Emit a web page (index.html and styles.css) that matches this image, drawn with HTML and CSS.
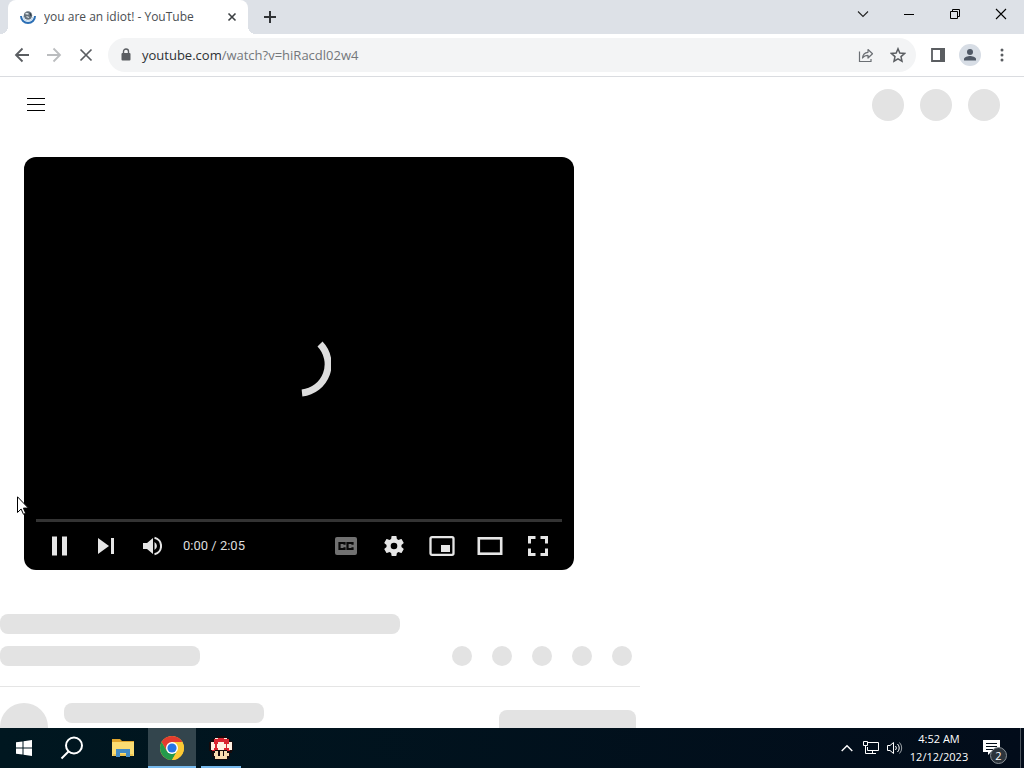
FILE: index.html
```html
<!DOCTYPE html>
<html lang="en">
<head>
<meta charset="utf-8">
<meta name="viewport" content="width=device-width, initial-scale=1">
<title>you are an idiot! - YouTube</title>
<link rel="stylesheet" href="styles.css">
</head>
<body>
<div class="desktop">
  <header class="tabstrip">
    <div class="tab">
      <svg class="favicon" width="16" height="16" viewBox="0 0 16 16"><path d="M1 7a7 7 0 1 0 14 0" fill="none" stroke="#2c6fb5" stroke-width="2"/><path d="M3.500 7a4.500 4.500 0 0 0 9 1" fill="none" stroke="#a9cbe8" stroke-width="1"/><circle cx="8" cy="6.500" r="4.200" fill="#65717b"/><path d="M5.500 4.500l3 .5M6.500 7.500l2.500 1" stroke="#dfe5e9" stroke-width="1.300"/><path d="M10 4l1 3" stroke="#263746"/></svg>
      <span class="tab-title">you are an idiot! - YouTube</span>
      <button class="tab-close" aria-label="Close tab"><svg width="10" height="10" viewBox="0 0 10 10"><path d="M1.500 1.500l7 7M8.500 1.500l-7 7" stroke="#3c4043" stroke-width="1.600"/></svg></button>
    </div>
    <button class="new-tab" aria-label="New tab"><svg width="12" height="12" viewBox="0 0 12 12"><path d="M6 0v12M0 6h12" stroke="#303336" stroke-width="2"/></svg></button>
    <div class="window-controls">
      <button aria-label="Search tabs"><svg width="12" height="12" viewBox="0 0 12 12"><path d="M1 3.500l5 5 5-5" fill="none" stroke="#222" stroke-width="1.100"/></svg></button>
      <button aria-label="Minimize"><svg width="10" height="10" viewBox="0 0 10 10"><path d="M0 5.500h10" stroke="#000"/></svg></button>
      <button aria-label="Restore"><svg width="10" height="10" viewBox="0 0 10 10"><path d="M.5 2.500h7v7h-7zM2.500 2.500v-2h7v7h-2" fill="none" stroke="#000"/></svg></button>
      <button aria-label="Close"><svg width="12" height="12" viewBox="0 0 12 12"><path d="M1 1l10 10M11 1L1 11" stroke="#000" stroke-width="1.100"/></svg></button>
    </div>
  </header>

  <nav class="toolbar">
    <button class="tool" aria-label="Back"><svg width="16" height="16" viewBox="0 0 16 16"><path d="M15 8H2M8.500 1.500L2 8l6.500 6.500" fill="none" stroke="#5a5d61" stroke-width="1.800"/></svg></button>
    <button class="tool" aria-label="Forward"><svg width="16" height="16" viewBox="0 0 16 16"><path d="M1 8h13M7.500 1.500L14 8l-6.500 6.500" fill="none" stroke="#bbbdbf" stroke-width="1.800"/></svg></button>
    <button class="tool" aria-label="Stop"><svg width="14" height="14" viewBox="0 0 14 14"><path d="M1.500 1.500l11 11M12.500 1.500l-11 11" stroke="#5a5d61" stroke-width="1.700"/></svg></button>
    <div class="omnibox">
      <svg class="lock" width="10" height="14" viewBox="0 0 10 14"><rect x="0.500" y="5" width="9" height="7.500" rx="1" fill="#5a5d61"/><path d="M2.500 6V3.500a2.500 2.500 0 0 1 5 0V6" fill="none" stroke="#5a5d61" stroke-width="1.400"/></svg>
      <a class="url" href="#"><span class="host">youtube.com</span>/watch?v=hiRacdl02w4</a>
      <button class="tool" aria-label="Share"><svg width="16" height="16" viewBox="0 0 16 16"><path d="M1.500 4.500v10h11.500v-2.500" fill="none" stroke="#6b6f74" stroke-width="1.200"/><path d="M4.500 11c.3-3.500 2.200-5.500 5.500-5.700V2.500l4.500 4.200L10 11V8.300c-2.500 0-4.200.8-5.500 2.700z" fill="none" stroke="#6b6f74" stroke-width="1.200" stroke-linejoin="round"/></svg></button>
      <button class="tool" aria-label="Bookmark"><svg width="16" height="16" viewBox="0 0 16 16"><path d="M8 1.800l1.800 4.300 4.700.4-3.500 3.100 1 4.600L8 11.800l-4 2.400 1-4.600-3.500-3.100 4.700-.4z" fill="none" stroke="#5a5d61" stroke-width="1.500"/></svg></button>
    </div>
    <button class="tool" aria-label="Side panel"><svg width="14" height="14" viewBox="0 0 14 14"><path d="M1 1h12v12H1z" fill="none" stroke="#5a5d61" stroke-width="1.800"/><path d="M9 0h5v14H9z" fill="#5a5d61"/></svg></button>
    <button class="tool" aria-label="Profile"><svg width="22" height="22" viewBox="0 0 22 22"><circle cx="11" cy="11" r="11" fill="#d7dde5"/><circle cx="11" cy="8" r="3" fill="#4f5866"/><path d="M5 16.500v-1.500c0-2 4-3 6-3s6 1 6 3v1.500z" fill="#4f5866"/></svg></button>
    <button class="tool" aria-label="Menu"><svg width="4" height="14" viewBox="0 0 4 14" fill="#5a5d61"><circle cx="2" cy="2" r="1.500"/><circle cx="2" cy="7" r="1.500"/><circle cx="2" cy="12" r="1.500"/></svg></button>
  </nav>

  <main class="page">
    <div class="masthead">
      <button class="guide" aria-label="Guide"><svg width="18" height="16" viewBox="0 0 18 16"><path d="M0 1.500h18M0 7.500h18M0 13.500h18" stroke="#000"/></svg></button>
      <div class="masthead-end"><span class="avatar-ghost"></span><span class="avatar-ghost"></span><span class="avatar-ghost"></span></div>
    </div>

    <section class="player">
      <div class="stage"><svg width="64" height="64" viewBox="0 0 64 64"><path d="M53 11A29 29 0 0 1 35 60" fill="none" stroke="#ddd" stroke-width="7"/></svg></div>
      <div class="progress"></div>
      <div class="controls">
        <button class="first" aria-label="Pause"><svg width="18" height="20" viewBox="0 0 18 20" fill="#e6e6e6"><path d="M1 .5h5v19H1zM11 .5h5v19h-5z"/></svg></button>
        <button aria-label="Next"><svg width="18" height="18" viewBox="0 0 18 18" fill="#e6e6e6"><path d="M1 1l11 8-11 8zM14 1h3v16h-3z"/></svg></button>
        <button aria-label="Mute"><svg width="20" height="20" viewBox="0 0 20 20" fill="#e6e6e6"><path d="M1 7v6h4l6 5V2L5 7zM12.500 6v8a4.500 4.500 0 0 0 0-8z"/><path d="M12.500 1.800a8.400 8.400 0 0 1 0 16.400" fill="none" stroke="#e6e6e6" stroke-width="2"/></svg></button>
        <span class="time">0:00 / 2:05</span>
        <div class="controls-end">
          <button aria-label="Subtitles"><svg width="22" height="18" viewBox="0 0 22 18"><rect width="22" height="18" rx="2" fill="#717171"/><path d="M9.500 7.800V6H4.500v6h5v-1.800M17.500 7.800V6h-5v6h5v-1.800" fill="none" stroke="#080808" stroke-width="2.200"/></svg></button>
          <button aria-label="Settings"><svg width="24" height="24" viewBox="0 0 24 24"><path fill="#e6e6e6" d="M19.430 12.980c.04-.32.070-.64.070-.98s-.03-.66-.07-.98l2.110-1.650c.19-.15.240-.42.120-.64l-2-3.460c-.12-.22-.39-.3-.61-.22l-2.490 1c-.52-.4-1.080-.73-1.690-.98l-.38-2.650C14.460 2.180 14.250 2 14 2h-4c-.25 0-.46.18-.49.42l-.38 2.650c-.61.250-1.170.59-1.690.98l-2.490-1c-.23-.09-.49 0-.61.22l-2 3.460c-.13.220-.07.490.12.640l2.110 1.650c-.04.320-.07.650-.07.980s.03.660.07.980l-2.110 1.650c-.19.150-.24.420-.12.640l2 3.460c.12.220.39.300.61.220l2.490-1c.52.400 1.080.730 1.690.980l.38 2.650c.03.240.24.420.49.420h4c.25 0 .46-.18.490-.42l.38-2.650c.61-.25 1.170-.59 1.690-.98l2.490 1c.23.090.49 0 .61-.22l2-3.460c.12-.22.070-.49-.12-.64zM12 15.300a3.300 3.300 0 1 1 0-6.600 3.300 3.300 0 0 1 0 6.600z"/></svg></button>
          <button aria-label="Miniplayer"><svg width="26" height="20" viewBox="0 0 26 20"><rect x="1.500" y="1.200" width="23" height="17.600" rx="1.500" fill="none" stroke="#e6e6e6" stroke-width="2.300"/><path d="M12 9h9v7h-9z" fill="#e6e6e6"/></svg></button>
          <button aria-label="Theater mode"><svg width="26" height="18" viewBox="0 0 26 18"><rect x="1.800" y="1.300" width="22.400" height="15.400" fill="none" stroke="#e6e6e6" stroke-width="2.600"/></svg></button>
          <button aria-label="Full screen"><svg width="20" height="20" viewBox="0 0 20 20"><path d="M1.500 7.500v-6h6M12.500 1.500h6v6M18.500 12.500v6h-6M7.500 18.500h-6v-6" fill="none" stroke="#e6e6e6" stroke-width="3"/></svg></button>
        </div>
      </div>
    </section>

    <section class="details">
      <div class="ghost ghost-title"></div>
      <div class="meta">
        <div class="ghost ghost-line"></div>
        <div class="actions"><span class="dot"></span><span class="dot"></span><span class="dot"></span><span class="dot"></span><span class="dot"></span></div>
      </div>
      <div class="owner">
        <span class="owner-avatar"></span>
        <div class="ghost ghost-line"></div>
        <div class="ghost subscribe"></div>
      </div>
    </section>
  </main>

  <footer class="taskbar">
    <button class="task" aria-label="Start"><svg width="16" height="16" viewBox="0 0 16 16" fill="#fff"><path d="M0 2.300l6.500-.9v6.100H0zM7.500 1.200L16 0v7.500H7.500zM0 8.500h6.500v6.100L0 13.700zM7.500 8.500H16V16l-8.500-1.200z"/></svg></button>
    <button class="task" aria-label="Search"><svg width="24" height="24" viewBox="0 0 24 24" fill="none" stroke="#fff" stroke-width="2"><circle cx="14" cy="9.500" r="8"/><path d="M8.500 15.500L1.500 22.500"/></svg></button>
    <div class="apps">
      <button class="task" aria-label="File Explorer"><svg width="22" height="20" viewBox="0 0 22 20"><path d="M0 1h8l2 2h12v15H0z" fill="#e0a52d"/><path d="M0 4h22v14H0z" fill="#fbdc72"/><path d="M1 16h20v2H1z" fill="#edc451"/><path d="M4 19v-8h14v8h-4v-4H8v4z" fill="#438bc5"/></svg></button>
      <button class="task active" aria-label="Google Chrome"><svg width="24" height="24" viewBox="0 0 24 24"><circle cx="12" cy="12" r="12" fill="#fcc934"/><path d="M1.610 6A12 12 0 0 1 22.390 6H12L6.800 15z" fill="#e33b2e"/><path d="M1.610 6A12 12 0 0 0 12 24l5.200-9-5.200 3-5.200-3z" fill="#249a4b"/><path d="M22.390 6A12 12 0 0 1 12 24l5.200-9L17 6z" fill="#fcc934"/><circle cx="12" cy="12" r="6" fill="#fff"/><circle cx="12" cy="12" r="4.600" fill="#2674e4"/></svg></button>
      <button class="task open" aria-label="Mushroom"><svg width="24" height="24" viewBox="0 0 16 16" shape-rendering="crispEdges"><path d="M5 0h6v1h2v1h1v1h1v1h1v6h-1v1h-1v3h-1v1h-1v1H4v-1H3v-1H2v-3H1v-1H0V4h1V3h1V2h1V1h2z" fill="#160b0c"/><path d="M5 1h6v1h2v2h1v6H2V4h1V2h2z" fill="#d92531"/><path d="M6 4h4v1h1v3h-1v1H6V8H5V5h1zM1 4h2v1h1v3H3v1H1zM13 4h2v5h-2V8h-1V5h1zM4 1h2v1H4zM10 1h2v1h-2z" fill="#fff0e2"/><path d="M4 9h8v1H4z" fill="#160b0c"/><path d="M4 10h8v1h1v2h-1v2H4v-2H3v-2h1z" fill="#f8dcb0"/><path d="M6 10h1v3H6zM9 10h1v3H9z" fill="#160b0c"/></svg></button>
    </div>
    <div class="tray">
      <button aria-label="Show hidden icons"><svg width="12" height="8" viewBox="0 0 12 8"><path d="M.7 7L6 1.700 11.300 7" fill="none" stroke="#fff" stroke-width="1.400"/></svg></button>
      <button aria-label="Network"><svg width="18" height="16" viewBox="0 0 18 16" fill="none" stroke="#fff"><path d="M6 2.500h10.500v8H5.500V7M10.500 10.500v3M7 13.500h7M1.500 1.500h4v4h-4zM3.500 5.500v8H7"/></svg></button>
      <button aria-label="Volume"><svg width="16" height="14" viewBox="0 0 16 14" fill="none" stroke="#fff"><path d="M.5 4.500h2.500l3.500-3v11L3 9.500H.5z"/><path d="M8.500 5a3 3 0 0 1 0 4M10.500 3a5.500 5.500 0 0 1 0 8"/><path d="M12.500 1.500a8 8 0 0 1 0 11" stroke="#9da3a8"/></svg></button>
      <div class="clock"><time>4:52 AM</time><time>12/12/2023</time></div>
      <button class="notices" aria-label="Notifications"><svg width="18" height="16" viewBox="0 0 18 16"><path d="M0 0h17v12H8l-3 3v-3H0z" fill="#fff"/><path d="M3 3.500h11M3 6.500h11M3 9.500h7" stroke="#020d18"/></svg><span class="badge">2</span></button>
      <div class="peek"></div>
    </div>
  </footer>

  <svg class="cursor" width="12" height="19" viewBox="0 0 12 19"><path d="M.5.8v15.700l3.600-3.500 2.400 5.300 2.200-1-2.300-5.200h5z" fill="#fff" stroke="#000"/></svg>
</div>
</body>
</html>
```
FILE: styles.css
```css
* { box-sizing: border-box; }

body {
  margin: 0;
  font-family: "Open Sans", "Noto Sans", sans-serif;
  background: #fff;
}

button {
  display: flex;
  align-items: center;
  justify-content: center;
  padding: 0;
  border: 0;
  background: none;
  color: inherit;
  font: inherit;
}

svg { display: block; flex: none; }

.desktop {
  position: relative;
  display: flex;
  flex-direction: column;
  height: 100vh;
  overflow: hidden;
}

/* Browser frame */
.tabstrip {
  display: flex;
  flex: none;
  height: 34px;
  padding-left: 8px;
  background: #dde1e7;
}

.tab {
  position: relative;
  display: flex;
  align-items: center;
  gap: 8px;
  width: 240px;
  padding: 0 10px 0 12px;
  border-radius: 8px 8px 0 0;
  background: #fff;
}

.tab::before,
.tab::after {
  content: "";
  position: absolute;
  bottom: 0;
  width: 8px;
  height: 8px;
}

.tab::before {
  left: -8px;
  background: radial-gradient(circle at 0 0, #dde1e7 8px, #fff 8px);
}

.tab::after {
  right: -8px;
  background: radial-gradient(circle at 100% 0, #dde1e7 8px, #fff 8px);
}

.tab-title {
  flex: 1;
  overflow: hidden;
  white-space: nowrap;
  font-size: 12px;
  line-height: 16px;
  color: #4a4e52;
}

.tab-close { width: 12px; height: 16px; }
.new-tab { width: 28px; margin-left: 8px; }

.window-controls { display: flex; margin-left: auto; height: 28px; }
.window-controls button { width: 46px; }

.toolbar {
  display: flex;
  flex: none;
  align-items: center;
  height: 43px;
  padding: 0 6px;
  border-bottom: 1px solid #dadce0;
  background: #fff;
}

.tool { flex: none; width: 32px; height: 32px; }

.omnibox {
  display: flex;
  flex: 1;
  align-items: center;
  height: 34px;
  margin: 0 6px;
  padding: 0 2px 0 13px;
  border-radius: 17px;
  background: #f3f4f5;
}

.url {
  flex: 1;
  margin-left: 11px;
  font-size: 13px;
  line-height: 20px;
  color: #74777b;
  text-decoration: none;
}

.host { color: #2e3134; }

/* Page */
.page { flex: 1; min-height: 0; overflow: hidden; }

.masthead {
  display: flex;
  align-items: center;
  justify-content: space-between;
  height: 56px;
  padding: 0 24px 0 16px;
}

.guide { width: 40px; height: 40px; }
.masthead-end { display: flex; gap: 16px; }

.avatar-ghost,
.dot,
.owner-avatar {
  flex: none;
  border-radius: 50%;
  background: #e3e3e3;
}

.avatar-ghost { width: 32px; height: 32px; }

.player {
  display: flex;
  flex-direction: column;
  max-width: 550px;
  aspect-ratio: 4 / 3;
  margin: 24px 24px 0;
  padding: 0 12px;
  border-radius: 12px;
  background: #000;
}

.stage {
  display: flex;
  flex: 1;
  align-items: center;
  justify-content: center;
  padding-top: 54px;
}

.progress { height: 3px; background: #333; }

.controls { display: flex; align-items: center; height: 48px; }
.controls button { width: 46px; height: 48px; }
.controls .first { margin-left: 1px; }

.time {
  margin-left: 8px;
  font-family: Roboto, sans-serif;
  font-size: 13px;
  line-height: 16px;
  color: #ddd;
}

.controls-end { display: flex; margin-left: auto; }
.controls .controls-end button { width: 48px; }

.details { max-width: 640px; margin-top: 44px; }
.ghost { height: 20px; border-radius: 8px; background: #e3e3e3; }
.ghost-title { width: 400px; }
.ghost-line { width: 200px; }

.meta {
  display: flex;
  align-items: center;
  justify-content: space-between;
  padding: 12px 8px 20px 0;
  border-bottom: 1px solid #e5e5e5;
}

.actions { display: flex; gap: 20px; }
.dot { width: 20px; height: 20px; }

.owner {
  display: flex;
  gap: 16px;
  padding: 16px 4px 0 0;
}

.owner-avatar { width: 48px; height: 48px; }
.subscribe { width: 137px; height: 36px; margin: 7px 0 0 auto; }

/* Taskbar */
.taskbar {
  display: flex;
  flex: none;
  height: 40px;
  background: linear-gradient(90deg, #001720, #020c1a);
  color: #fff;
}

.task { width: 48px; height: 40px; }
.apps { display: flex; gap: 1px; padding-left: 3px; }

.active {
  background: linear-gradient(#76b9ed, #76b9ed) bottom / 100% 2px no-repeat #33454d;
}

.open {
  background: linear-gradient(#76b9ed, #76b9ed) bottom / 40px 2px no-repeat;
}

.tray { display: flex; margin-left: auto; }
.tray button { width: 24px; height: 40px; }

.clock {
  display: flex;
  flex-direction: column;
  justify-content: center;
  width: 64px;
  text-align: center;
  font-size: 11px;
  line-height: 18px;
}

.tray .notices {
  position: relative;
  width: 49px;
  padding-right: 8px;
}

.badge {
  position: absolute;
  right: 13px;
  bottom: 4px;
  width: 17px;
  height: 17px;
  border: 1px solid #8b9298;
  border-radius: 50%;
  background: #2c343c;
  font-size: 11px;
  line-height: 15px;
  text-align: center;
}

.peek { width: 4px; border-left: 1px solid #4b545d; }

.cursor { position: absolute; left: 17px; top: 496px; }
```
